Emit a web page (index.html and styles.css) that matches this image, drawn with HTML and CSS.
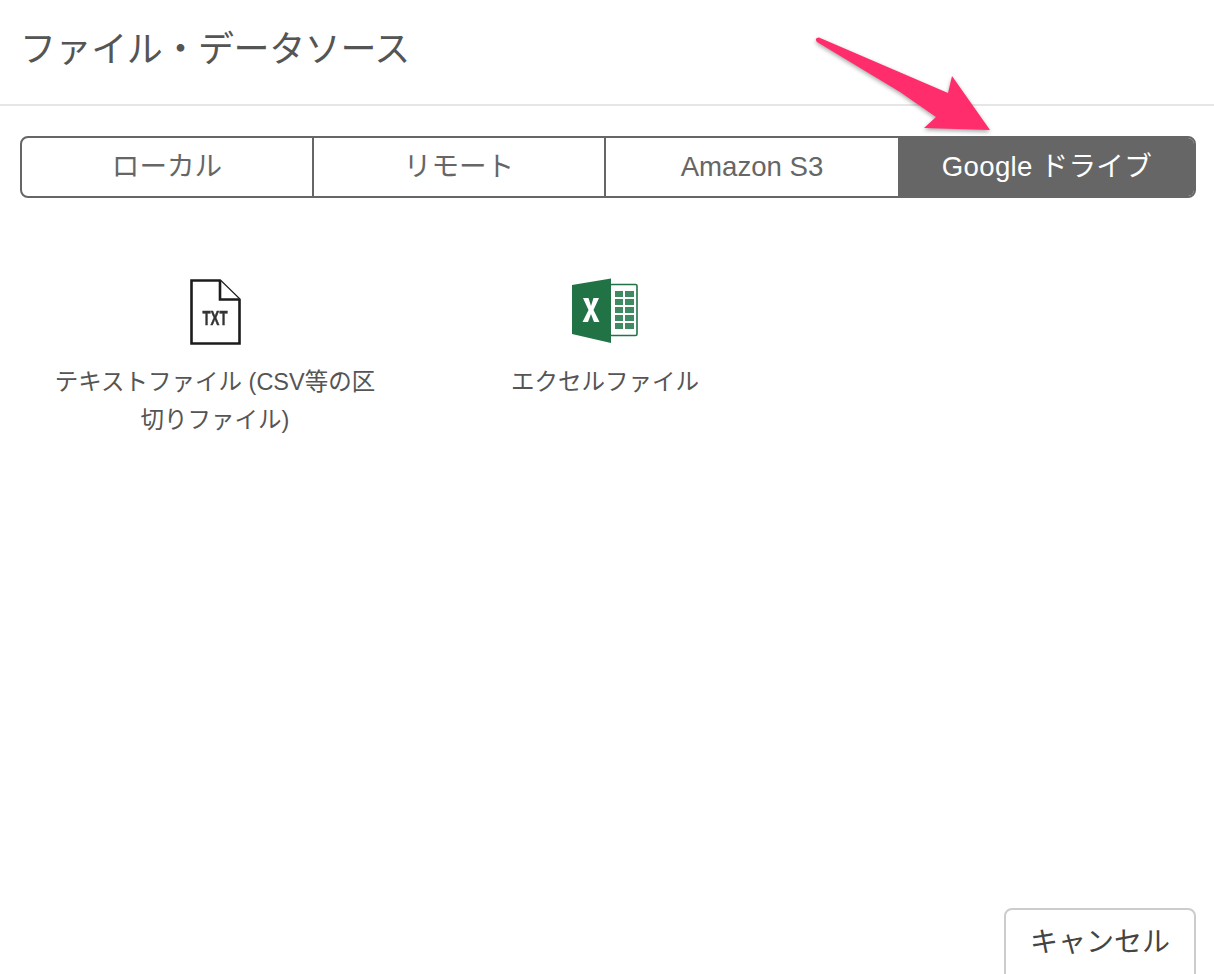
FILE: index.html
```html
<!DOCTYPE html>
<html lang="ja">
<head>
<meta charset="utf-8">
<title>ファイル・データソース</title>
<link rel="stylesheet" href="styles.css">
</head>
<body>
<div class="dialog">
  <header class="dialog-header">
    <h1 class="dialog-title">ファイル・データソース</h1>
  </header>
  <main class="dialog-body">
    <nav class="tabs">
      <div class="tab">ローカル</div>
      <div class="tab">リモート</div>
      <div class="tab tab-latin">Amazon S3</div>
      <div class="tab tab-active">Google ドライブ</div>
    </nav>
    <div class="sources">
      <div class="source">
        <svg class="source-icon" width="90" height="68" viewBox="0 0 90 68">
          <path class="txt-outline" d="M21.5 2.5H50L69.5 21.5V65.5H21.5Z"/>
          <path class="txt-outline" d="M50 2.5V21.5H69.5"/>
          <text class="txt-label" x="45" y="47" text-anchor="middle" textLength="25" lengthAdjust="spacingAndGlyphs">TXT</text>
        </svg>
        <div class="source-label">テキストファイル (CSV等の区切りファイル)</div>
      </div>
      <div class="source">
        <svg class="source-icon" width="90" height="68" viewBox="0 0 90 68">
          <rect x="50" y="6.5" width="27" height="51" rx="1.5" fill="#fff" stroke="#217346" stroke-width="1.6"/>
          <g fill="#3f8a63">
            <rect x="55" y="13" width="8" height="6"/><rect x="65" y="13" width="9" height="6"/>
            <rect x="55" y="21" width="8" height="6"/><rect x="65" y="21" width="9" height="6"/>
            <rect x="55" y="29" width="8" height="6"/><rect x="65" y="29" width="9" height="6"/>
            <rect x="55" y="37" width="8" height="6"/><rect x="65" y="37" width="9" height="6"/>
            <rect x="55" y="45" width="8" height="6"/><rect x="65" y="45" width="9" height="6"/>
          </g>
          <path d="M12 7L51 0.5V65L12 56Z" fill="#217346"/>
          <path d="M23 20H28.5L31 28L33.5 20H39L33.5 32L39.5 44H34L31 36L28 44H22.5L28.5 32Z" fill="#fff"/>
        </svg>
        <div class="source-label">エクセルファイル</div>
      </div>
    </div>
  </main>
  <footer class="dialog-footer">
    <button class="cancel-button" type="button">キャンセル</button>
  </footer>
  <svg class="callout-arrow" width="190" height="110" viewBox="810 30 190 110">
    <path d="M819 37.5L948 93L952 76L990 130L924 128L936 117L900 92L817 42Q814 38 819 37.5Z" fill="#ff2d6b"/>
  </svg>
</div>
</body>
</html>
```

FILE: styles.css
```css
* {
  box-sizing: border-box;
}

html,
body {
  margin: 0;
  padding: 0;
  height: 974px;
  overflow: hidden;
  background: #fff;
}

body {
  font-family: "Liberation Sans", "Noto Sans CJK JP", sans-serif;
  color: #555;
}

.dialog {
  position: relative;
  display: flex;
  flex-direction: column;
  height: 974px;
}

.dialog-header {
  height: 106px;
  padding: 25px 20px 0;
  border-bottom: 2px solid #e6e6e6;
}

.dialog-title {
  margin: 0;
  font-size: 36px;
  line-height: 50px;
  font-weight: 400;
  letter-spacing: -0.4px;
  color: #555;
}

.dialog-body {
  flex: 1;
  padding: 30px 18px 0 20px;
}

.tabs {
  display: grid;
  grid-template-columns: 292px 292px 294px 298px;
  height: 62px;
  border: 2px solid #666;
  border-radius: 8px;
  overflow: hidden;
}

.tab {
  display: flex;
  align-items: center;
  justify-content: center;
  padding-bottom: 6px;
  font-size: 27.6px;
  color: #666;
  border-right: 2px solid #666;
}

.tab-latin {
  padding-bottom: 0;
}

.tab-active {
  padding-right: 4px;
  background: #666;
  color: #fff;
  letter-spacing: 0.3px;
  border-right: 0;
}

.sources {
  display: grid;
  grid-template-columns: repeat(3, 390px);
  padding-top: 80px;
}

.source {
  display: flex;
  flex-direction: column;
  align-items: center;
  padding: 0 30px;
}

.source-icon {
  display: block;
  margin-bottom: 17px;
  filter: blur(0.4px);
}

.source-label {
  font-size: 23.5px;
  line-height: 38px;
  text-align: center;
  color: #555;
}

.txt-outline {
  fill: #fff;
  stroke: #1c1c1c;
  stroke-width: 2.6;
}

.txt-label {
  font-family: "Liberation Sans", sans-serif;
  font-size: 20px;
  font-weight: 700;
  fill: #333;
  stroke: #333;
  stroke-width: 0.5;
}

.dialog-footer {
  display: flex;
  justify-content: flex-end;
  height: 66px;
  padding-right: 18px;
  overflow: hidden;
}

.cancel-button {
  flex: none;
  width: 192px;
  height: 76px;
  padding: 0 0 12px;
  border: 2px solid #ccc;
  border-radius: 8px;
  background: #fff;
  font-family: "Liberation Sans", "Noto Sans CJK JP", sans-serif;
  font-size: 28px;
  color: #444;
}

.callout-arrow {
  position: absolute;
  left: 810px;
  top: 30px;
  filter: drop-shadow(0 2px 2px rgba(0, 0, 0, 0.35));
  overflow: visible;
}
```
